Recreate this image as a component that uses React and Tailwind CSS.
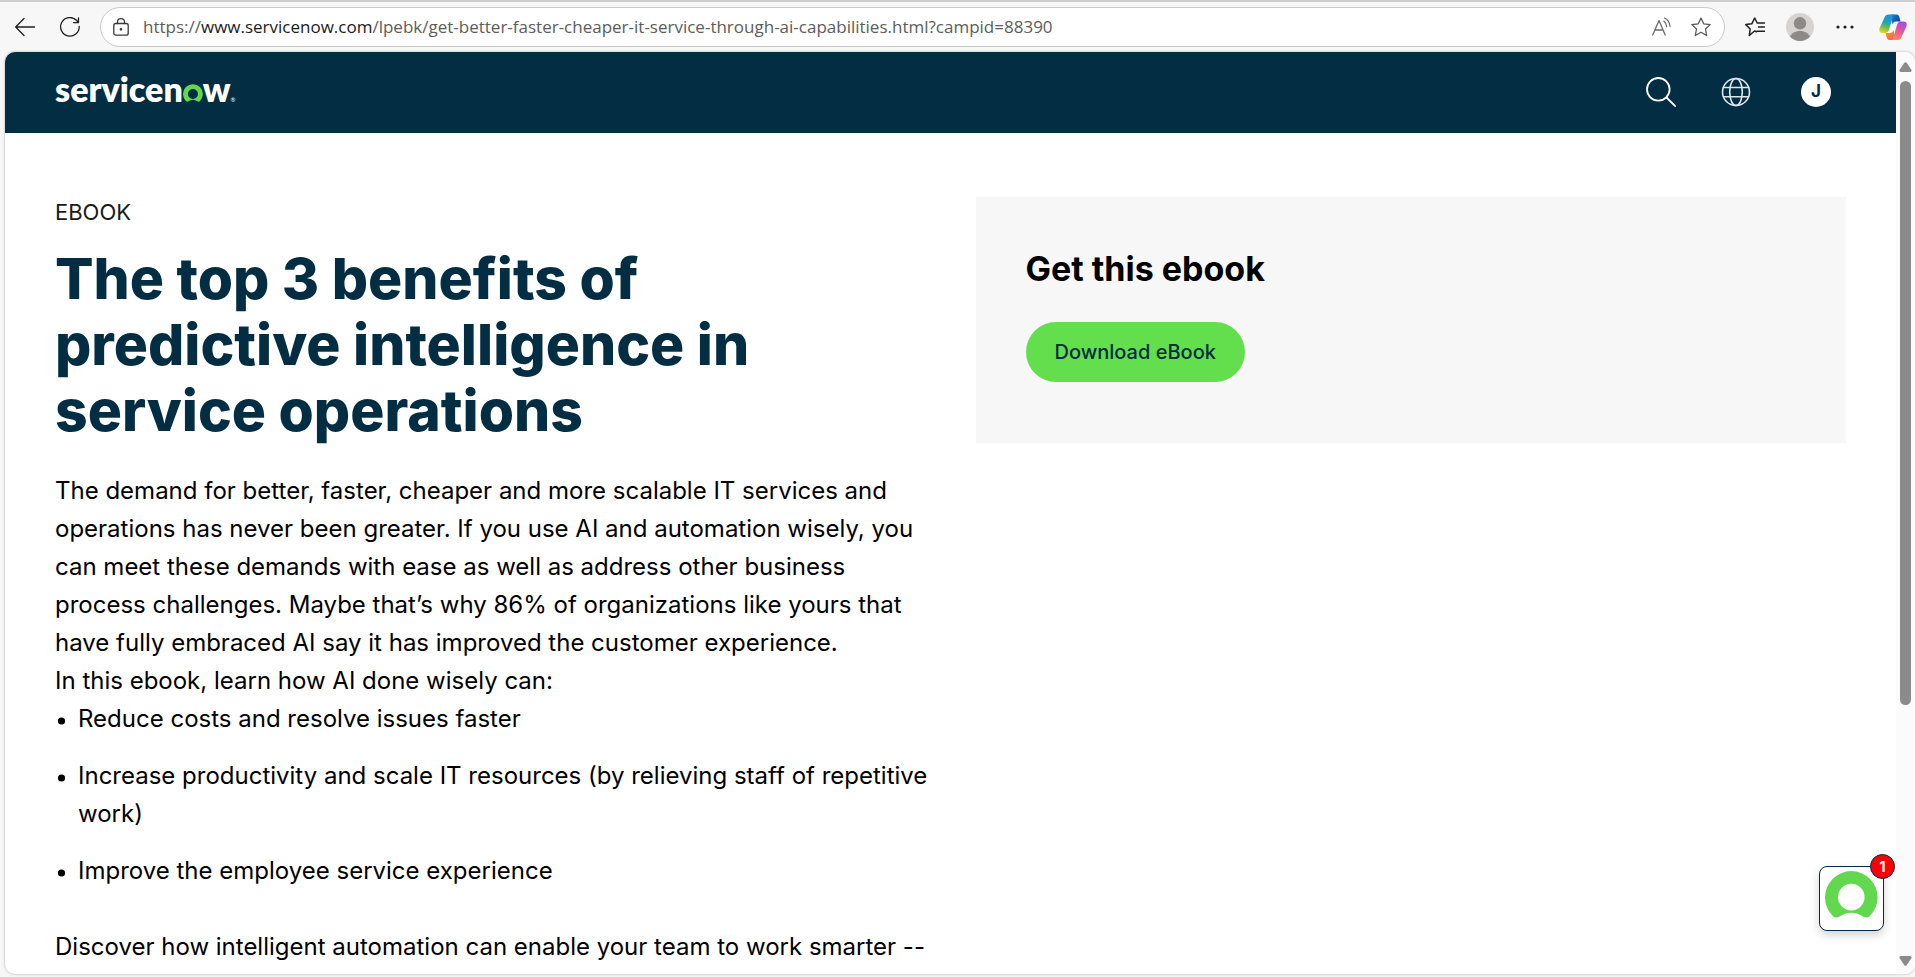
const URL_REST =
  "/lpebk/get-better-faster-cheaper-it-service-through-ai-capabilities.html?campid=88390";

const INTRO = [
  "The demand for better, faster, cheaper and more scalable IT services and",
  "operations has never been greater. If you use AI and automation wisely, you",
  "can meet these demands with ease as well as address other business",
  "process challenges. Maybe that’s why 86% of organizations like yours that",
  "have fully embraced AI say it has improved the customer experience.",
];

const BENEFITS = [
  ["Reduce costs and resolve issues faster"],
  ["Increase productivity and scale IT resources (by relieving staff of repetitive", "work)"],
  ["Improve the employee service experience"],
];

function Lines({ lines }) {
  return lines.map((line) => (
    <span key={line} className="block whitespace-nowrap">
      {line}{" "}
    </span>
  ));
}

function Ring({ className }) {
  return (
    <svg viewBox="0 0 53 47" className={className} aria-hidden="true">
      <path
        fill="#62d84e"
        fillRule="evenodd"
        d="M8 45.3A26.3 26.3 0 1 1 44.6 45.3C43 47 40 47 38 45.5A20 20 0 0 0 14.6 45.5C12.5 47 9.5 47 8 45.3ZM26.3 12.8A13.3 13.3 0 1 0 26.3 39.4A13.3 13.3 0 1 0 26.3 12.8Z"
      />
    </svg>
  );
}

function Icon({ className, children, box = "0 0 20 20", width = 1.3 }) {
  return (
    <svg
      viewBox={box}
      className={className}
      fill="none"
      stroke="currentColor"
      strokeWidth={width}
      strokeLinecap="round"
      strokeLinejoin="round"
      aria-hidden="true"
    >
      {children}
    </svg>
  );
}

function Copilot() {
  return (
    <svg viewBox="0 0 28 27" className="h-[27px] w-7" aria-hidden="true">
      <defs>
        <linearGradient id="cpLeft" x1="0.6" y1="0" x2="0.3" y2="1">
          <stop offset="0" stopColor="#1b8fe0" />
          <stop offset="0.45" stopColor="#1fa6b8" />
          <stop offset="0.7" stopColor="#6cbf4a" />
          <stop offset="1" stopColor="#f2d21b" />
        </linearGradient>
        <linearGradient id="cpTop" x1="0" y1="0" x2="1" y2="0.6">
          <stop offset="0" stopColor="#1b7fe0" />
          <stop offset="1" stopColor="#14449c" />
        </linearGradient>
        <linearGradient id="cpRight" x1="0.7" y1="0" x2="0.3" y2="1">
          <stop offset="0" stopColor="#a24be8" />
          <stop offset="0.45" stopColor="#e0559f" />
          <stop offset="1" stopColor="#fb8a5b" />
        </linearGradient>
        <linearGradient id="cpBottom" x1="0" y1="0" x2="1" y2="1">
          <stop offset="0" stopColor="#f7a21f" />
          <stop offset="1" stopColor="#ee5a5a" />
        </linearGradient>
      </defs>
      <path fill="url(#cpTop)" d="M12 .5H17.5C19 .5 20 1.5 20.5 3.5L21.5 7.5H17C15 7.5 14 8.5 13.3 10.5Z" />
      <path fill="url(#cpBottom)" d="M16 26H10.5C9 26 8 25 7.5 23L6.5 19H11C13 19 14 18 14.7 16Z" />
      <path fill="url(#cpLeft)" d="M5.5 3.5C6.3 1.3 7.5.5 9.5.5H16C14.5 1 14 2 13.5 4L10 15.5C9.3 18 8 19 6 19H3.5C.5 19-.3 17 .6 14Z" />
      <path fill="url(#cpRight)" d="M22.5 23C21.7 25.2 20.5 26 18.5 26H12C13.5 25.5 14 24.5 14.5 22.5L18 11C18.7 8.5 20 7.5 22 7.5H24.5C27.5 7.5 28.3 9.5 27.4 12.5Z" />
    </svg>
  );
}

function Toolbar() {
  return (
    <div className="flex h-[52px] shrink-0 items-center border-t-2 border-[#cdcdcd] pr-2 pl-[15px] text-[#1f1f1f]">
      <button type="button" aria-label="Back">
        <Icon className="size-5">
          <path d="M19.5 10H.7M9 1.5L.7 10L9 18.5" />
        </Icon>
      </button>
      <button type="button" aria-label="Refresh" className="ml-[25px]">
        <Icon className="size-5">
          <path d="M19.2 9.5A9.3 9.3 0 1 1 16.5 3.3L18.5 5.5M18.5.8V5.6H13.5" />
        </Icon>
      </button>
      <div className="ml-5 flex h-10 flex-1 items-center rounded-full border border-[#c9c9c9] bg-white pr-[13px] pl-3">
        <button type="button" aria-label="Site information" className="text-[#3a3a3a]">
          <Icon className="h-[18px] w-4" box="0 0 16 18">
            <rect x=".8" y="5.5" width="14.4" height="11.7" rx="2" />
            <path d="M4.5 5.5V4A3.5 3.3 0 0 1 11.5 4V5.5" />
            <circle cx="8" cy="11.3" r=".7" fill="currentColor" />
          </Icon>
        </button>
        <div className="ml-3.5 flex-1 font-['Open_Sans',sans-serif] text-[17px] whitespace-nowrap text-[#5c5c5c]">
          https://<span className="text-[#1b1b1b]">www.servicenow.com</span>
          {URL_REST}
        </div>
        <button type="button" aria-label="Read aloud" className="text-[#6a6a6a]">
          <Icon className="size-5">
            <path d="M1.700 18L8 3.500L14.200 18M4 13H12" />
            <path d="M13 4.200Q15.300 6 15.600 9.500M13.500 1Q18.500 3.500 19 9.300" />
          </Icon>
        </button>
        <button type="button" aria-label="Add to favorites" className="ml-5 text-[#5a5a5a]">
          <Icon className="size-5">
            <path d="M10 1L12.7 6.8L19.2 7.6L14.5 12L15.7 18.5L10 15.3L4.3 18.5L5.5 12L.8 7.6L7.3 6.8Z" />
          </Icon>
        </button>
      </div>
      <button type="button" aria-label="Favorites" className="ml-5">
        <Icon className="size-5" width={1.5}>
          <path d="M11.5 14.8L9.5 14L4.3 18.5L5.2 12L.8 7.6L6.8 6.8L9.7 1L12.2 6H19.5M13.5 10H19.5M12 14.2H19.5" />
        </Icon>
      </button>
      <button type="button" aria-label="Profile" className="ml-[21px]">
        <svg viewBox="0 0 28 28" className="size-7" aria-hidden="true">
          <circle cx="14" cy="14" r="14" fill="#d6d3d0" />
          <circle cx="14" cy="10.3" r="6.2" fill="#8d8986" />
          <path d="M4 23.8C6 19.5 10 18 14 18S22 19.5 24 23.8A14 14 0 0 1 4 23.8Z" fill="#8d8986" />
        </svg>
      </button>
      <button type="button" aria-label="More" className="ml-[22px]">
        <svg viewBox="0 0 18 4" className="h-1 w-[18px]" fill="#1f1f1f" aria-hidden="true">
          <circle cx="2" cy="2" r="1.6" />
          <circle cx="9" cy="2" r="1.6" />
          <circle cx="16" cy="2" r="1.6" />
        </svg>
      </button>
      <button type="button" aria-label="Copilot" className="ml-[25px]">
        <Copilot />
      </button>
    </div>
  );
}

function SiteHeader() {
  return (
    <header className="flex h-[81px] shrink-0 items-center bg-[#032d42] pr-[65px] pb-px pl-[50px] text-white">
      <a
        href="#home"
        aria-label="servicenow"
        className="flex items-baseline pt-1 font-[Lato,sans-serif] text-[34px] leading-10 font-extrabold"
      >
        <span>servicen</span>
        <Ring className="h-[18px] w-5" />
        <span>w</span>
        <span className="text-[6px] font-normal">®</span>
      </a>
      <button type="button" aria-label="Search" className="ml-auto">
        <Icon className="size-[30px]" box="0 0 30 30" width={1.8}>
          <circle cx="12.3" cy="12.3" r="11.3" />
          <path d="M20.5 20.5L29.2 29.2" />
        </Icon>
      </button>
      <button type="button" aria-label="Language" className="ml-[45px] text-[#dfe6ea]">
        <Icon className="size-[30px]" box="0 0 30 30" width={1.6}>
          <circle cx="15" cy="15" r="13.5" />
          <ellipse cx="15" cy="15" rx="6.3" ry="13.5" />
          <path d="M2.5 10.5H27.5M2.5 19.8H27.5" />
        </Icon>
      </button>
      <button
        type="button"
        aria-label="Account"
        className="ml-[50px] flex size-[30px] items-center justify-center rounded-full bg-white text-[17px] font-bold text-[#032d42]"
      >
        J
      </button>
    </header>
  );
}

function Scrollbar() {
  return (
    <div className="flex w-[19px] shrink-0 flex-col items-center bg-[#fbfbfb] pt-2.5 pb-2" aria-hidden="true">
      <svg viewBox="0 0 13 10" className="h-2.5 w-[13px]">
        <path d="M5.3.8Q6.5-.5 7.7.8L12.5 8Q13 9.8 11.3 10H1.7Q0 9.8.5 8Z" fill="#8b8b8b" />
      </svg>
      <div className="my-[9px] w-[11px] flex-1">
        <div className="h-[72%] rounded-full bg-[#8b8b8b]" />
      </div>
      <svg viewBox="0 0 13 10" className="h-2.5 w-[13px]">
        <path d="M5.3 9.2Q6.5 10.5 7.7 9.2L12.5 2Q13 .2 11.3 0H1.7Q0 .2.5 2Z" fill="#8b8b8b" />
      </svg>
    </div>
  );
}

export default function App() {
  return (
    <div className="flex h-screen flex-col bg-[#f7f7f7] font-[Inter,sans-serif] text-black">
      <Toolbar />
      <div className="relative mb-[3px] ml-[5px] flex min-h-0 flex-1 overflow-hidden rounded-[10px] bg-white shadow-[0_0_2px_1px_#d6d6d6]">
        <div className="flex min-w-0 flex-1 flex-col overflow-hidden">
          <SiteHeader />
          <main className="grid grid-cols-2 items-start gap-[50px] px-[50px] pt-16">
            <section className="min-w-0">
              <p className="text-[22px] leading-[30px] text-[#1a1a1a]">EBOOK</p>
              <h1 className="mt-[19px] text-[57px] leading-[66px] font-extrabold text-[#032d42]">
                <Lines lines={["The top 3 benefits of", "predictive intelligence in", "service operations"]} />
              </h1>
              <div className="mt-7 text-2xl leading-[38px]">
                <p>
                  <Lines lines={INTRO} />
                </p>
                <p>In this ebook, learn how AI done wisely can:</p>
                <ul className="flex flex-col gap-[19px]">
                  {BENEFITS.map((lines) => (
                    <li key={lines[0]} className="flex">
                      <svg viewBox="0 0 23 38" className="h-[38px] w-[23px] shrink-0" aria-hidden="true">
                        <circle cx="6.5" cy="21" r="3.6" />
                      </svg>
                      <div>
                        <Lines lines={lines} />
                      </div>
                    </li>
                  ))}
                </ul>
                <p className="mt-[38px]">Discover how intelligent automation can enable your team to work smarter --</p>
              </div>
            </section>
            <aside className="bg-[#f7f7f7] px-[50px] pt-[50px] pb-[61px]">
              <h2 className="text-[34px] leading-[44px] font-bold">Get this ebook</h2>
              <button
                type="button"
                className="mt-[31px] h-[60px] rounded-full bg-[#63df4e] px-[29px] text-xl font-medium text-[#032d42]"
              >
                Download eBook
              </button>
            </aside>
          </main>
        </div>
        <Scrollbar />
        <button
          type="button"
          aria-label="Open chat, 1 new message"
          className="absolute right-[31px] bottom-[43px] flex size-[65px] justify-center rounded-lg border border-[#032d42] bg-white pt-1 shadow-[0_4px_10px_rgba(0,0,0,0.18)]"
        >
          <Ring className="h-[47px] w-[53px]" />
          <span className="absolute -top-[13px] -right-3 flex size-[25px] items-center justify-center rounded-full border border-[#032d42] bg-[#fb0007] text-sm font-bold text-white">
            1
          </span>
        </button>
      </div>
    </div>
  );
}
